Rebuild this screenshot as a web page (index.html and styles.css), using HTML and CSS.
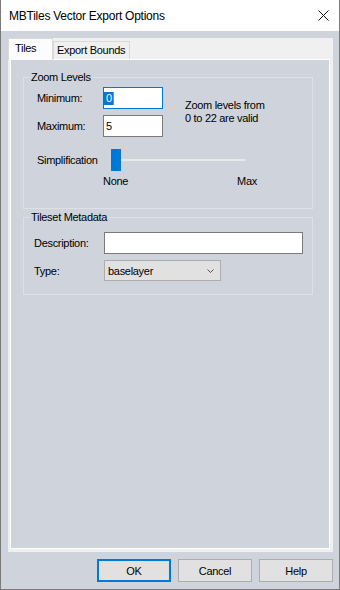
FILE: index.html
```html
<!DOCTYPE html>
<html>
<head>
<meta charset="utf-8">
<link rel="stylesheet" href="styles.css">
</head>
<body>
<div class="window">
  <div class="titlebar">
    <span class="title">MBTiles Vector Export Options</span>
    <svg class="close" width="11" height="11" viewBox="0 0 11 11"><path d="M0.5 0.5L10.5 10.5M10.5 0.5L0.5 10.5" stroke="#111" stroke-width="1" fill="none"/></svg>
  </div>
  <div class="client">
    <div class="tabctl">
      <div class="tabstrip">
        <div class="tab active">Tiles</div>
        <div class="tab other">Export Bounds</div>
      </div>
      <div class="page">
        <fieldset class="group g-zoom">
          <legend>Zoom Levels</legend>
          <div class="zoom-body">
            <div class="zoom-fields">
              <div class="row"><span class="lbl lbl-zoom">Minimum:</span><div class="input focus"><span class="sel">0</span><span class="caret"></span></div></div>
              <div class="row"><span class="lbl lbl-zoom">Maximum:</span><div class="input">5</div></div>
            </div>
            <div class="hint">Zoom levels from<br>0 to 22 are valid</div>
          </div>
          <div class="slider-row">
            <span class="lbl lbl-slider">Simplification</span>
            <div class="slider"><span class="thumb"></span><span class="track"></span></div>
          </div>
          <div class="ticks"><span>None</span><span>Max</span></div>
        </fieldset>
        <fieldset class="group g-meta">
          <legend>Tileset Metadata</legend>
          <div class="meta-body">
            <div class="row"><span class="lbl lbl-meta">Description:</span><div class="input wide"></div></div>
            <div class="row"><span class="lbl lbl-meta">Type:</span><div class="combo"><span>baselayer</span><svg width="7" height="4" viewBox="0 0 7 4"><path d="M0.5 0.5L3.5 3.5L6.5 0.5" stroke="#555" stroke-width="1" fill="none"/></svg></div></div>
          </div>
        </fieldset>
      </div>
    </div>
    <div class="buttons">
      <div class="btn default">OK</div>
      <div class="btn">Cancel</div>
      <div class="btn">Help</div>
    </div>
  </div>
</div>
</body>
</html>
```
FILE: styles.css
```css
* { box-sizing: border-box; }
html, body { margin: 0; padding: 0; }
body {
  width: 340px;
  height: 590px;
  font-family: "Liberation Sans", Arial, sans-serif;
  font-size: 11px;
  letter-spacing: -0.3px;
  color: #000;
  background: #fff;
}
.window {
  width: 340px;
  height: 590px;
  border: 1px solid #7a7a7a;
  border-top: 0;
  display: flex;
  flex-direction: column;
  background: #cfd4dc;
}
.titlebar {
  height: 31px;
  flex: none;
  background: #fff;
  display: flex;
  align-items: center;
  justify-content: space-between;
  padding: 0 10px 0 8px;
}
.title { font-size: 12px; letter-spacing: -0.25px; color: #000; }
.close { display: block; }
.client {
  flex: 1;
  display: flex;
  flex-direction: column;
  padding: 7px 6px 7px 7px;
}
.tabctl {
  flex: 1;
  display: flex;
  flex-direction: column;
  background: #f0f0f0;
}
.tabstrip {
  height: 21px;
  flex: none;
  display: flex;
  align-items: flex-end;
}
.tab {
  line-height: 14px;
  border: 1px solid #d9d9d9;
  border-bottom: 0;
  white-space: nowrap;
}
.tab.active {
  width: 45px;
  height: 22px;
  margin-bottom: -1px;
  padding: 2px 0 0 6px;
  background: #fcfcfc;
  position: relative;
  z-index: 1;
}
.tab.other {
  width: 77px;
  height: 18px;
  padding: 1px 0 0 3px;
  background: #f0f0f0;
}
.page {
  flex: 1;
  margin: 0 3px 3px 2px;
  border: 1px solid #fff;
  background: #cfd4dc;
}
.group {
  margin: 0 16px 0 12px;
  padding: 0;
  border: 1px solid #dde1e7;
  min-width: 0;
}
.g-zoom { margin-top: 10px; }
.g-meta { margin-top: 1px; }
.group legend {
  margin-left: 6px;
  padding: 0 1px;
  line-height: 14px;
}
.zoom-body {
  display: flex;
  align-items: center;
  padding: 3px 0 0 13px;
}
.zoom-fields {
  display: flex;
  flex-direction: column;
  gap: 6px;
}
.row {
  display: flex;
  align-items: center;
}
.lbl { flex: none; }
.lbl-zoom { width: 66px; }
.lbl-slider { width: 74px; }
.lbl-meta { width: 70px; }
.input {
  width: 60px;
  height: 22px;
  border: 1px solid #7a7a7a;
  background: #fff;
  line-height: 20px;
  padding-left: 2px;
  display: flex;
  align-items: center;
}
.input.focus { border-color: #0078d7; padding-left: 0; }
.sel {
  background: #0078d7;
  color: #fff;
  line-height: 13px;
  padding: 0 1px 0 2px;
}
.caret {
  width: 1px;
  height: 13px;
  background: #e07a2a;
}
.hint {
  margin-left: 22px;
  line-height: 13px;
}
.slider-row {
  display: flex;
  align-items: center;
  margin-top: 12px;
  padding-left: 13px;
}
.slider {
  width: 134px;
  height: 22px;
  display: flex;
  align-items: center;
}
.thumb {
  width: 10px;
  height: 22px;
  background: #0078d7;
  flex: none;
}
.track {
  flex: 1;
  height: 2px;
  background: #e6e8eb;
}
.ticks {
  display: flex;
  justify-content: space-between;
  width: 233px;
  margin-top: 4px;
  padding: 0 0 20px 79px;
  line-height: 13px;
  box-sizing: content-box;
  width: 154px;
}
.meta-body {
  display: flex;
  flex-direction: column;
  gap: 6px;
  padding: 8px 0 13px 10px;
}
.input.wide { width: 199px; }
.combo {
  width: 117px;
  height: 21px;
  background: #e1e1e1;
  border: 1px solid #adadad;
  display: flex;
  align-items: center;
  justify-content: space-between;
  padding: 0 6px 0 3px;
}
.combo svg { display: block; }
.buttons {
  flex: none;
  display: flex;
  justify-content: flex-end;
  gap: 7px;
  margin-top: 7px;
}
.btn {
  width: 74px;
  height: 23px;
  background: #e1e1e1;
  border: 1px solid #adadad;
  display: flex;
  align-items: center;
  justify-content: center;
}
.btn.default { border: 2px solid #0078d7; }
```
